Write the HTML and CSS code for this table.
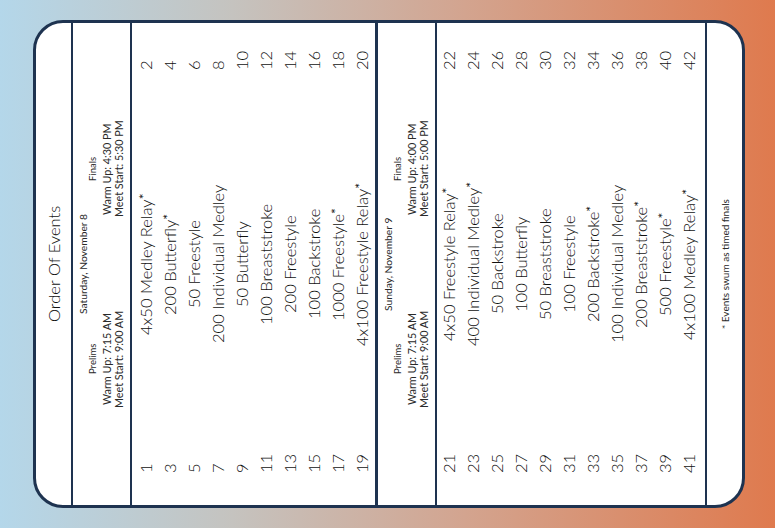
FILE: index.html
```html
<!DOCTYPE html>
<html lang="en">
<head>
<meta charset="utf-8">
<title>Order Of Events</title>
<link rel="stylesheet" href="styles.css">
</head>
<body>
<div class="card">
  <div class="title">Order Of Events</div>

  <div class="day-head">
    <div class="date">Saturday, November 8</div>
    <div class="sessions">
      <div class="session">
        <div class="session-name">Prelims</div>
        <div class="session-time">Warm Up: 7:15 AM</div>
        <div class="session-time">Meet Start: 9:00 AM</div>
      </div>
      <div class="session">
        <div class="session-name">Finals</div>
        <div class="session-time">Warm Up: 4:30 PM</div>
        <div class="session-time">Meet Start: 5:30 PM</div>
      </div>
    </div>
  </div>

  <div class="events events-sat">
    <div class="row"><span class="num-l">1</span><span class="name">4x50 Medley Relay<sup class="ast">*</sup></span><span class="num-r">2</span></div>
    <div class="row"><span class="num-l">3</span><span class="name">200 Butterfly<sup class="ast">*</sup></span><span class="num-r">4</span></div>
    <div class="row"><span class="num-l">5</span><span class="name">50 Freestyle</span><span class="num-r">6</span></div>
    <div class="row"><span class="num-l">7</span><span class="name">200 Individual Medley</span><span class="num-r">8</span></div>
    <div class="row"><span class="num-l">9</span><span class="name">50 Butterfly</span><span class="num-r">10</span></div>
    <div class="row"><span class="num-l">11</span><span class="name">100 Breaststroke</span><span class="num-r">12</span></div>
    <div class="row"><span class="num-l">13</span><span class="name">200 Freestyle</span><span class="num-r">14</span></div>
    <div class="row"><span class="num-l">15</span><span class="name">100 Backstroke</span><span class="num-r">16</span></div>
    <div class="row"><span class="num-l">17</span><span class="name">1000 Freestyle<sup class="ast">*</sup></span><span class="num-r">18</span></div>
    <div class="row"><span class="num-l">19</span><span class="name">4x100 Freestyle Relay<sup class="ast">*</sup></span><span class="num-r">20</span></div>
  </div>

  <div class="day-head day-head-sun">
    <div class="date">Sunday, November 9</div>
    <div class="sessions">
      <div class="session">
        <div class="session-name">Prelims</div>
        <div class="session-time">Warm Up: 7:15 AM</div>
        <div class="session-time">Meet Start: 9:00 AM</div>
      </div>
      <div class="session">
        <div class="session-name">Finals</div>
        <div class="session-time">Warm Up: 4:00 PM</div>
        <div class="session-time">Meet Start: 5:00 PM</div>
      </div>
    </div>
  </div>

  <div class="events events-sun">
    <div class="row"><span class="num-l">21</span><span class="name">4x50 Freestyle Relay<sup class="ast">*</sup></span><span class="num-r">22</span></div>
    <div class="row"><span class="num-l">23</span><span class="name">400 Individual Medley<sup class="ast">*</sup></span><span class="num-r">24</span></div>
    <div class="row"><span class="num-l">25</span><span class="name">50 Backstroke</span><span class="num-r">26</span></div>
    <div class="row"><span class="num-l">27</span><span class="name">100 Butterfly</span><span class="num-r">28</span></div>
    <div class="row"><span class="num-l">29</span><span class="name">50 Breaststroke</span><span class="num-r">30</span></div>
    <div class="row"><span class="num-l">31</span><span class="name">100 Freestyle</span><span class="num-r">32</span></div>
    <div class="row"><span class="num-l">33</span><span class="name">200 Backstroke<sup class="ast">*</sup></span><span class="num-r">34</span></div>
    <div class="row"><span class="num-l">35</span><span class="name">100 Individual Medley</span><span class="num-r">36</span></div>
    <div class="row"><span class="num-l">37</span><span class="name">200 Breaststroke<sup class="ast">*</sup></span><span class="num-r">38</span></div>
    <div class="row"><span class="num-l">39</span><span class="name">500 Freestyle<sup class="ast">*</sup></span><span class="num-r">40</span></div>
    <div class="row"><span class="num-l">41</span><span class="name">4x100 Medley Relay<sup class="ast">*</sup></span><span class="num-r">42</span></div>
  </div>

  <div class="footer">* Events swum as timed finals</div>
</div>
</body>
</html>
```

FILE: styles.css
```css
html, body {
  margin: 0;
  height: 100%;
}

body {
  width: 100vw;
  height: 100vh;
  overflow: hidden;
  display: flex;
  align-items: center;
  justify-content: center;
  padding-left: 3px;
  box-sizing: border-box;
  background: linear-gradient(90deg, #b4d7ea 0%, #c5c3bf 30%, #d3a48f 60%, #df7a4e 100%);
  font-family: Lato, "Open Sans", "DejaVu Sans", sans-serif;
  color: #222;
}

/* The card is a portrait program card set sideways:
   vertical writing, turned half a turn so text reads bottom-to-top. */
.card {
  flex: none;
  writing-mode: vertical-rl;
  text-orientation: sideways;
  transform: rotate(180deg);
  inline-size: 488px;
  block-size: 712px;
  box-sizing: border-box;
  border: 3px solid #1e3350;
  border-radius: 30px;
  background: #fff;
  display: flex;
  flex-direction: column;
}

.title {
  block-size: 35px;
  flex: none;
  display: flex;
  align-items: center;
  justify-content: center;
  font-size: 16.5px;
  font-weight: 300;
  color: #111;
}

.day-head {
  flex: none;
  box-sizing: border-box;
  block-size: 61px;
  border-block-start: 2px solid #1e3350;
  border-block-end: 2px solid #1e3350;
  padding-block-start: 5px;
  color: #2a2a2a;
}

.day-head-sun {
  border-block-start: 3px solid #1e3350;
  block-size: 62px;
}

.date {
  text-align: center;
  font-size: 10.3px;
  line-height: 10px;
}

.sessions {
  display: grid;
  grid-template-columns: 190px 190px;
  justify-content: center;
}

.session {
  text-align: center;
}

.session-name {
  font-size: 9.5px;
  line-height: 10px;
  margin-block-end: 3px;
}

.session-time {
  font-size: 10.8px;
  line-height: 12px;
}

.events {
  flex: none;
  display: flex;
  flex-direction: column;
  box-sizing: border-box;
}

.events-sat {
  block-size: 243px;
  padding-block-start: 2px;
}

.events-sun {
  block-size: 270px;
  border-block-end: 2px solid #1e3350;
}

.row {
  display: grid;
  grid-template-columns: 60px 1fr 60px;
  padding-inline: 28px;
  block-size: 24px;
  line-height: 24px;
  font-size: 16.5px;
  font-weight: 300;
  white-space: nowrap;
  color: #111;
}

.num-l {
  padding-inline-start: 4px;
}

.name {
  text-align: center;
}

.num-r {
  padding-inline-start: 41px;
}

.ast {
  font-size: 0.85em;
  font-weight: 400;
  line-height: 0;
  vertical-align: 0.25em;
}

.footer {
  flex: 1;
  display: flex;
  align-items: center;
  justify-content: center;
  font-size: 10px;
  color: #2a2a2a;
}
```
